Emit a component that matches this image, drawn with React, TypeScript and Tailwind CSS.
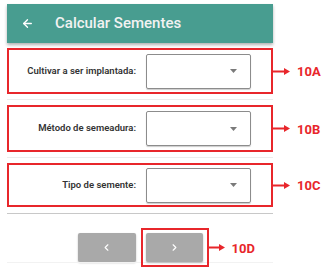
import { ArrowLeft, ChevronLeft, ChevronRight } from 'lucide-react';

const RED = '#e8262b';

function Pointer({ label, width }: { label: string; width: number }) {
  return (
    <div className="absolute left-full top-1/2 -translate-y-1/2 flex items-center">
      <svg width={width} height="8" viewBox={`0 0 ${width} 8`} className="block">
        <line x1="0" y1="4" x2={width - 5} y2="4" stroke={RED} strokeWidth="2" />
        <polygon points={`${width - 6},0.5 ${width},4 ${width - 6},7.5`} fill={RED} />
      </svg>
      <span className="ml-[7px] text-[13px] font-bold text-[#e8262b] leading-none">{label}</span>
    </div>
  );
}

function SelectRow({ label, tag, h }: { label: string; tag: string; h: string }) {
  return (
    <div className={`relative flex items-center border-2 border-[#e8262b] ${h}`}>
      <div className="w-[127px] text-right text-[9.5px] font-semibold text-[#333]">{label}</div>
      <div className="ml-[10px] w-[105px] h-[35px] border border-[#8c8c8c] rounded-[2px] shadow-[0_1px_1px_rgba(0,0,0,0.2)] flex items-center justify-end pr-[13px]">
        <svg width="7" height="4" viewBox="0 0 7 4">
          <polygon points="0,0 7,0 3.5,4" fill="#7a7a7a" />
        </svg>
      </div>
      <Pointer label={tag} width={19} />
    </div>
  );
}

export default function App() {
  return (
    <div
      className="relative w-[334px] h-[275px] bg-white overflow-hidden"
      style={{ fontFamily: 'Roboto, "Liberation Sans", sans-serif' }}
    >
      <div className="ml-[7px] w-[266px] pt-[4px] flex flex-col">
        <div className="h-[39px] bg-[#489d90] shadow-[0_2px_3px_rgba(0,0,0,0.3)] flex items-center">
          <ArrowLeft size={13} strokeWidth={2.5} className="ml-[14px] text-white" />
          <span className="ml-[21px] text-[15px] font-medium text-[#f2f2f2]">Calcular Sementes</span>
        </div>

        <div className="mt-[5px]">
          <SelectRow label="Cultivar a ser implantada:" tag="10A" h="h-[46px]" />
        </div>
        <div className="my-[5px] h-px bg-[#ececec]" />
        <SelectRow label="Método de semeadura:" tag="10B" h="h-[47px]" />
        <div className="my-[5px] h-px bg-[#ececec]" />
        <SelectRow label="Tipo de semente:" tag="10C" h="h-[44px]" />
        <div className="mt-[6px] h-px bg-[#c8c8c8]" />

        <div className="mt-[19px] flex justify-center gap-[10px]">
          <button className="w-[58px] h-[29px] rounded-[2px] bg-[#a9a9a9] shadow-[0_1px_2px_rgba(0,0,0,0.25)] flex items-center justify-center">
            <ChevronLeft size={11} strokeWidth={2.5} className="text-white" />
          </button>
          <div className="relative">
            <button className="w-[57px] h-[29px] rounded-[2px] bg-[#a9a9a9] shadow-[0_1px_2px_rgba(0,0,0,0.25)] flex items-center justify-center">
              <ChevronRight size={11} strokeWidth={2.5} className="text-white" />
            </button>
            <div className="absolute -left-[5px] -top-[5px] w-[68px] h-[39px] border-2 border-[#e8262b]">
              <Pointer label="10D" width={18} />
            </div>
          </div>
        </div>
        <div className="h-px bg-[#f2f2f2]" />
      </div>
    </div>
  );
}
